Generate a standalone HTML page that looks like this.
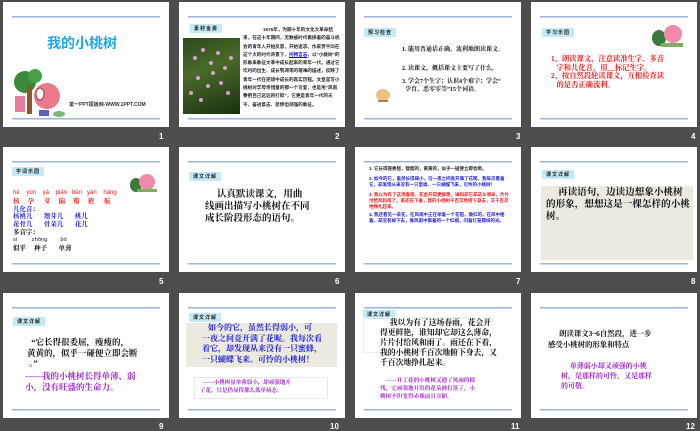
<!DOCTYPE html>
<html><head><meta charset="utf-8"><style>
*{margin:0;padding:0;box-sizing:border-box}
body{width:700px;height:431px;background:#4d4d4d;position:relative;overflow:hidden;font-family:"Liberation Sans","Noto Sans CJK SC",sans-serif}
.s{position:absolute;width:166px;height:125px;background:#fff;overflow:hidden}
.s:before,.s:after{content:"";position:absolute;left:9px;width:148px;height:1px;background:#9cb8e2;border-bottom:1px solid #c8d8f0}
.s:before{top:14px}.s:after{top:116px}
.n{position:absolute;color:#fff;font-size:8px;font-weight:bold}
.a{position:absolute}
.lb{position:absolute;background:#c4eaf6;font-size:5px;font-weight:bold;padding:1px 4px;color:#222;letter-spacing:1px}
.t{position:absolute;font-weight:bold;font-family:"Liberation Serif","Noto Serif CJK SC",serif;white-space:nowrap}
.r{position:absolute;left:10px;font-weight:bold;font-family:"Liberation Serif","Noto Serif CJK SC",serif;white-space:pre;font-size:6.5px;line-height:7px}
</style></head><body>

<!-- row 1 -->
<div class="s" style="left:3px;top:2px">
 <div class="t" style="left:44px;top:31px;font-size:14px;color:#1ea5e8;font-family:'Liberation Sans','Noto Sans CJK SC',sans-serif">我的小桃树</div>
 <svg class="a" style="left:6px;top:66px" width="58" height="50"><circle cx="16" cy="14" r="11" fill="#3a8a3a"/><circle cx="26" cy="8" r="7" fill="#4aa04a"/><rect x="18" y="18" width="5" height="28" fill="#8a5a2a"/><rect x="6" y="28" width="10" height="16" fill="#e87aa0"/><circle cx="38" cy="28" r="13" fill="#e87a8a"/><ellipse cx="31" cy="26" rx="4" ry="6" fill="#fff" stroke="#b03030"/><rect x="30" y="42" width="10" height="6" fill="#6060c0"/><ellipse cx="50" cy="46" rx="6" ry="3" fill="#7ab87a"/></svg>
 <div class="a" style="left:66px;top:99px;font-size:5px;font-weight:bold;color:#333">第一PPT模板网-WWW.1PPT.COM</div>
</div>
<div class="n" style="left:159px;top:132px">1</div>

<div class="s" style="left:179px;top:2px">
 <div class="lb" style="left:11px;top:22px">素材金囊</div>
 <div class="a" style="left:4px;top:36px;width:57px;height:76px;background:linear-gradient(160deg,#2a4a1a,#4a6a2a 40%,#1a3010);"></div>
 <svg class="a" style="left:4px;top:36px" width="57" height="76"><g fill="#d8a0d0"><circle cx="12" cy="20" r="2"/><circle cx="20" cy="12" r="2"/><circle cx="28" cy="25" r="2"/><circle cx="35" cy="15" r="2"/><circle cx="42" cy="30" r="2"/><circle cx="15" cy="40" r="2"/><circle cx="25" cy="48" r="2"/><circle cx="38" cy="45" r="2"/><circle cx="48" cy="20" r="2"/><circle cx="8" cy="55" r="2"/><circle cx="30" cy="35" r="2"/><circle cx="18" cy="62" r="2"/><circle cx="45" cy="55" r="2"/></g></svg>
 <div class="a" style="left:64px;top:24px;width:98px;font-size:4.6px;line-height:8.3px;color:#222;font-weight:bold;text-indent:20px">1976年，为期十年的文化大革命结束，在这十年期间，无数被时代裹挟着的奋斗机会的青年人开始反思，开始追求。作家贾平凹在这个大的时代背景下，<span style="color:#00f;text-decoration:underline">托物言志</span>，以“小桃树”的形象来象征文革中成长起来的青年一代。通过它坎坷的出生、成长到凋零的艰难的描述，反映了青年一代在逆境中成长的真实历程。文章是写小桃树对学母亲惜童的那一个可爱，也是用“风雨要把自己远远的打碎”，它更是青年一代的天不、奋进意志、悲惨但顽强的象征。</div>
</div>
<div class="n" style="left:335px;top:132px">2</div>

<div class="s" style="left:355px;top:2px">
 <div class="lb" style="left:9px;top:26px">预习检查</div>
 <div class="t" style="left:47px;top:42px;font-size:6px;color:#111">1. 能用普通话正确、流利地朗读课文。</div>
 <div class="t" style="left:47px;top:61px;font-size:6px;color:#111">2. 读课文，概括课文主要写了什么。</div>
 <div class="t" style="left:47px;top:76px;font-size:6px;line-height:8px;color:#111">3. 学会7个生字；认识4个难字；学会“<br>&nbsp;&nbsp;孕育、恶零零等”15个词语。</div>
 <svg class="a" style="left:18px;top:84px" width="20" height="16"><ellipse cx="10" cy="9" rx="7" ry="6" fill="#f0c080"/><rect x="5" y="14" width="10" height="2" fill="#a08060"/></svg>
</div>
<div class="n" style="left:516px;top:132px">3</div>

<div class="s" style="left:531px;top:2px">
 <div class="lb" style="left:11px;top:26px">学习乐园</div>
 <svg class="a" style="left:120px;top:22px" width="34" height="24"><ellipse cx="8" cy="14" rx="7" ry="8" fill="#3a7a3a"/><circle cx="22" cy="10" r="9" fill="#f08aa8"/><rect x="10" y="19" width="22" height="4" fill="#7ab060"/></svg>
 <div class="t" style="left:20px;top:53px;font-size:7.3px;line-height:8.6px;color:#f01818">1、朗读课文，注意读准生字、多音<br>&nbsp;&nbsp;&nbsp;字和儿化音，用__标记生字。<br>2、按自然段轮读课文，互相检查读<br>&nbsp;&nbsp;&nbsp;的是否正确流利。</div>
</div>
<div class="n" style="left:691px;top:132px">4</div>

<!-- row 2 -->
<div class="s" style="left:3px;top:147px">
 <div class="lb" style="left:9px;top:20px">学词乐园</div>
 <svg class="a" style="left:126px;top:26px" width="30" height="20"><ellipse cx="7" cy="12" rx="6" ry="7" fill="#3a7a3a"/><circle cx="18" cy="9" r="8" fill="#f08aa8"/><rect x="8" y="16" width="20" height="3" fill="#7ab060"/></svg>
 <div class="r" style="top:43px;color:#f01818;font-weight:normal;font-family:'Liberation Sans',sans-serif;font-size:6px">hé    yùn    yá    piān   bàn   yàn    háng</div>
 <div class="r" style="top:51px;color:#f01818">核     孕      芽     偏     瓣     艳      航</div>
 <div class="r" style="top:58.5px;color:#1a1adf">儿化音：</div>
 <div class="r" style="top:66px;color:#1a1adf">核桃儿       翘芽儿       桃儿</div>
 <div class="r" style="top:73.5px;color:#1a1adf">花骨儿       骨朵儿       花儿</div>
 <div class="r" style="top:82px;color:#111">多音字：</div>
 <div class="r" style="top:90px;color:#222;font-weight:normal;font-family:'Liberation Sans',sans-serif;font-size:5.8px">si         zhǒng        bó</div>
 <div class="r" style="top:98px;color:#111">似乎     种子       单薄</div>
</div>
<div class="n" style="left:159px;top:277px">5</div>

<div class="s" style="left:179px;top:147px">
 <div class="lb" style="left:10px;top:25px">课文详解</div>
 <div class="t" style="left:26px;top:42px;font-size:9.5px;line-height:12px;color:#111">&nbsp;&nbsp;&nbsp;&nbsp;&nbsp;认真默读课文，用曲<br>线画出描写小桃树在不同<br>成长阶段形态的语句。</div>
</div>
<div class="n" style="left:335px;top:277px">6</div>

<div class="s" style="left:355px;top:147px">
 <div class="a" style="left:14px;top:19px;width:140px;font-size:4.5px;font-weight:bold;line-height:6px;color:#222">1. 它长得很委屈，瘦瘦的，黄黄的，似乎一碰便立即会断。</div>
 <div class="a" style="left:14px;top:29px;width:140px;font-size:4.5px;font-weight:bold;line-height:6px;color:#1a1adf">2. 如今的它，虽然长得弱小，可一夜之间竟开满了花呢。我每次看着它，却发现从来没有一只蜜蜂、一只蝴蝶飞来，可怜的小桃树！</div>
 <div class="a" style="left:14px;top:45px;width:140px;font-size:4.5px;font-weight:bold;line-height:6px;color:#f01818">3. 我以为有了这场春雨，花会开得更鲜艳，谁知却它却这么薄命，片片付给风和雨了。雨还在下着，我的小桃树千百次地俯下身去，又千百次地挣扎起来。</div>
 <div class="a" style="left:14px;top:65px;width:140px;font-size:4.5px;font-weight:bold;line-height:6px;color:#1a1adf">4. 我还看见一朵花，在风雨中正在举着一个花苞，微红的，在风中摇着，却没有掉下去，像风雨中飘着的一个红帽，闪着灯笼那样的光。</div>
</div>
<div class="n" style="left:516px;top:277px">7</div>

<div class="s" style="left:531px;top:147px">
 <div class="lb" style="left:11px;top:23px">课文详解</div>
 <div class="a" style="left:10px;top:39px;width:152px;height:74px;background:#ece9e1"></div>
 <div class="t" style="left:15px;top:40px;font-size:9.6px;line-height:12px;color:#111">&nbsp;&nbsp;&nbsp;&nbsp;&nbsp;再读语句，边读边想象小桃树<br>的形象，想想这是一棵怎样的小桃<br>树。</div>
</div>
<div class="n" style="left:691px;top:277px">8</div>

<!-- row 3 -->
<div class="s" style="left:3px;top:293px">
 <div class="lb" style="left:10px;top:24px">课文详解</div>
 <div class="t" style="left:24px;top:44px;font-size:8.5px;line-height:10.5px;color:#111">&nbsp;&nbsp;“它长得很委屈，瘦瘦的，<br>黄黄的，似乎一碰便立即会断<br>&nbsp;。”</div>
 <div class="t" style="left:22px;top:78px;font-size:8.5px;line-height:11px;color:#a020d0">——我的小桃树长得单薄、弱<br>小，没有旺盛的生命力。</div>
</div>
<div class="n" style="left:159px;top:422px">9</div>

<div class="s" style="left:179px;top:293px">
 <div class="lb" style="left:10px;top:20px">课文详解</div>
 <div class="a" style="left:7px;top:30px;width:151px;height:44px;background:#ece9e1"></div>
 <div class="t" style="left:23px;top:30px;font-size:8px;line-height:10.5px;color:#1a1adf">&nbsp;&nbsp;&nbsp;如今的它，虽然长得弱小，可<br>一夜之间竟开满了花呢。我每次看<br>着它，却发现从来没有一只蜜蜂，<br>一只蝴蝶飞来。可怜的小桃树！</div>
 <div class="a" style="left:15px;top:84px;width:134px;height:22px;border:1px solid #e6e6e6"></div>
 <div class="t" style="left:21px;top:87px;font-size:5.5px;line-height:7.5px;color:#a020d0">&nbsp;&nbsp;——小桃树虽单薄弱小，却顽强地开<br>了花，只是仍显得那么孤单病态。</div>
</div>
<div class="n" style="left:330px;top:422px">10</div>

<div class="s" style="left:355px;top:293px">
 <div class="lb" style="left:8px;top:17px">课文详解</div>
 <div class="a" style="left:8px;top:24px;width:110px;height:36px;border:1px solid #eee"></div>
 <div class="t" style="left:25px;top:25px;font-size:7.8px;line-height:10px;color:#111">&nbsp;&nbsp;&nbsp;&nbsp;&nbsp;我以为有了这场春雨，花会开<br>得更鲜艳，谁知却它却这么薄命，<br>片片付给风和雨了。雨还在下着，<br>我的小桃树千百次地俯下身去，又<br>千百次地挣扎起来。</div>
 <div class="t" style="left:25px;top:84px;font-size:5.6px;line-height:8px;color:#a020d0">&nbsp;&nbsp;&nbsp;&nbsp;——开了花的小桃树又遇了风雨的摧<br>残，它顽强地开出的花朵被打落了，小<br>桃树不但变得赤裸而且丑陋。</div>
</div>
<div class="n" style="left:511px;top:422px">11</div>

<div class="s" style="left:531px;top:293px">
 <div class="t" style="left:17px;top:36px;font-size:7.4px;line-height:10.5px;color:#111">&nbsp;&nbsp;&nbsp;&nbsp;&nbsp;&nbsp;朗读课文3~6自然段，进一步<br>感受小桃树的形象和特点</div>
 <div class="t" style="left:30px;top:68px;font-size:7px;line-height:10px;color:#a020d0">&nbsp;&nbsp;&nbsp;&nbsp;&nbsp;单薄弱小却又顽强的小桃<br>树，是那样的可怜，又是那样<br>的可敬。</div>
</div>
<div class="n" style="left:686px;top:422px">12</div>

</body></html>
